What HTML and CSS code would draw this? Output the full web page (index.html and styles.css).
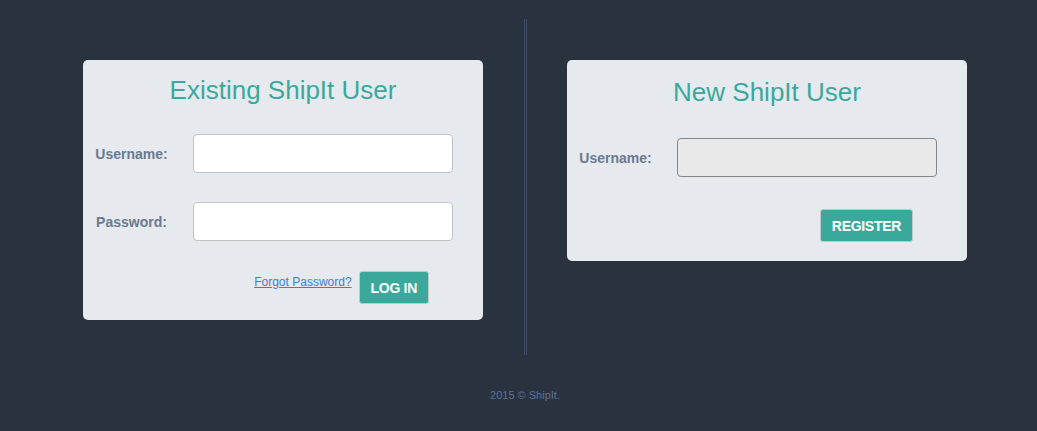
FILE: index.html
```html
<!DOCTYPE html>
<html lang="en">
<head>
  <meta charset="UTF-8" />
  <meta name="viewport" content="width=device-width, initial-scale=1.0"/>
  <title>ShipIt - Sign In</title>
  <link rel="stylesheet" href="styles.css">
</head>
<body>

<div class="wrap">
  <div class="main">
    <div class="card card-login">
      <h2 class="card-title">Existing ShipIt User</h2>
      <form class="form">
        <div class="row">
          <label for="loginUser">Username:</label>
          <input id="loginUser" type="text" />
        </div>
        <div class="row">
          <label for="loginPass">Password:</label>
          <input id="loginPass" type="password" />
        </div>
        <div class="actions">
          <a href="#" class="forgot">Forgot Password?</a>
          <button type="button" class="btn">LOG IN</button>
        </div>
      </form>
    </div>

    <div class="divider"></div>

    <div class="card card-register">
      <h2 class="card-title">New ShipIt User</h2>
      <form class="form">
        <div class="row">
          <label for="newUser">Username:</label>
          <input id="newUser" type="text" class="input-grey" />
        </div>
        <div class="actions">
          <button type="button" class="btn">REGISTER</button>
        </div>
      </form>
    </div>
  </div>

  <div class="footer">2015 &copy; ShipIt.</div>
</div>

</body>
</html>
```

FILE: styles.css
```css
body {
  margin: 0;
  background: #29323f;
  font-family: "Liberation Sans", Arial, sans-serif;
}

.wrap {
  width: 884px;
  margin-left: 83px;
  padding-top: 19px;
}

.main {
  display: flex;
  align-items: flex-start;
}

.divider {
  width: 1px;
  height: 336px;
  background: #27303f;
  border-left: 1px solid #424e68;
  border-right: 1px solid #424e68;
  margin: 0 40px 0 41px;
}

.card {
  width: 400px;
  margin-top: 41px;
  background: #e6e9ee;
  border-radius: 5px;
  box-sizing: border-box;
}

.card-login {
  padding: 15px 0 16px;
}

.card-register {
  padding: 17px 0 19px;
}

.card-title {
  margin: 0;
  font-size: 26px;
  font-weight: normal;
  line-height: 30px;
  text-align: center;
  color: #3aa99b;
}

.form {
  margin: 0;
}

.row {
  display: flex;
  align-items: center;
  margin-top: 29px;
}

.card-register .row {
  margin-top: 31px;
}

.row label {
  width: 97px;
  margin-right: 13px;
  text-align: center;
  font-size: 14px;
  font-weight: bold;
  color: #6b7a8f;
}

.row input {
  width: 260px;
  height: 39px;
  box-sizing: border-box;
  border: 1px solid #c2c2c2;
  border-radius: 4px;
  background: #fff;
  font-size: 14px;
  padding: 0 8px;
}

.row input.input-grey {
  background: #e9e9e9;
  border-color: #858585;
}

.actions {
  display: flex;
  justify-content: flex-end;
  align-items: flex-start;
  gap: 7px;
  padding-right: 54px;
  margin-top: 30px;
}

.card-register .actions {
  margin-top: 32px;
}

.forgot {
  margin-top: 4px;
  font-size: 12px;
  color: #3b7dd8;
}

.btn {
  height: 33px;
  padding: 0 11px;
  background: #3aa99b;
  color: #fff;
  border: 1px solid #bfcac9;
  border-radius: 3px;
  font-family: "Liberation Sans", Arial, sans-serif;
  font-size: 14px;
  font-weight: bold;
  letter-spacing: -0.3px;
}

.footer {
  margin-top: 34px;
  text-align: center;
  font-size: 11px;
  color: #5b7296;
}
```
